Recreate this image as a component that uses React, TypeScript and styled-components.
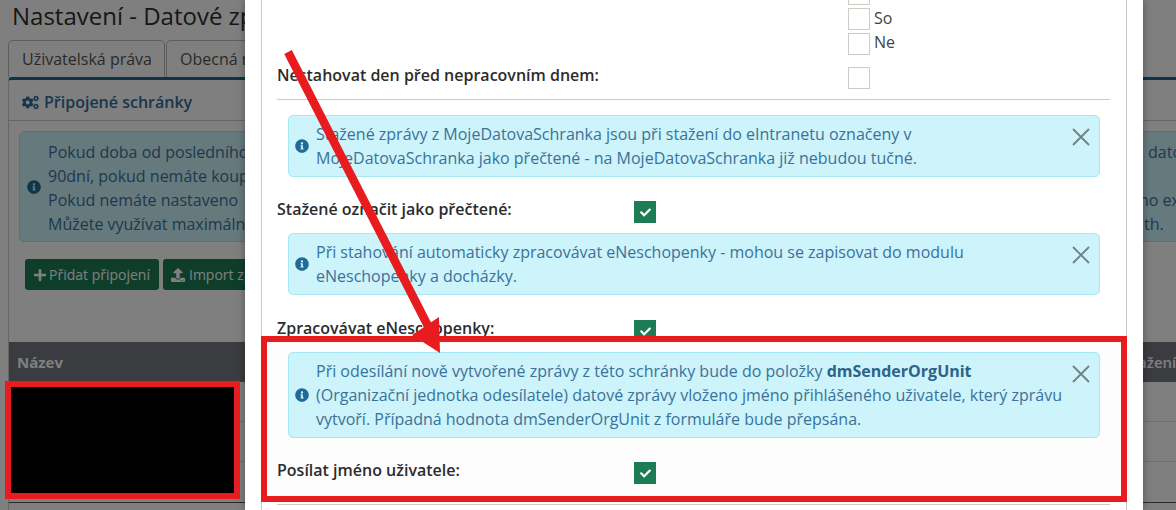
import React from "react";
import styled, { createGlobalStyle } from "styled-components";
import { FaInfoCircle, FaCogs, FaPlus, FaUpload, FaCheck } from "react-icons/fa";

const Global = createGlobalStyle`
  html, body { margin: 0; padding: 0; height: 510px; overflow: hidden; background: #fff; }
  body { font-family: "Open Sans", "Noto Sans", sans-serif; font-size: 16px; line-height: 24px; color: #333; }
  #root { height: 510px; }
`;

const Stage = styled.div`
  position: relative; width: 1176px; height: 510px; overflow: hidden;
`;
const Page = styled.div`
  width: 1260px; padding: 0 0 0 8px; box-sizing: border-box;
`;
const Title = styled.h1`
  margin: 0; padding: 0 0 0 4px; height: 40px; font-size: 24px; line-height: 32px; font-weight: 400; color: #2f2f2f;
`;
const Tabs = styled.div`display: flex; gap: 1px; height: 37px;`;
const Tab = styled.div`
  box-sizing: border-box; height: 37px; padding: 6px 13px 0; border: 1px solid #bbb; border-bottom: 0;
  border-radius: 5px 5px 0 0; color: #555; background: #fff; white-space: nowrap; width: ${p => p.$w}px;
`;
const Panel = styled.section`
  border: 1px solid #ccc; border-top: 3px solid #25648f; border-radius: 4px 0 0 0; height: 600px;
`;
const PanelHead = styled.header`
  height: 41px; box-sizing: border-box; padding: 12px 13px 8px; border-bottom: 1px solid #ccc;
  display: flex; align-items: center; gap: 5px; color: #2f6f9c; font-weight: 600;
`;
const PanelBody = styled.div`padding: 10px 0 0 10px;`;
const BgInfo = styled(FaInfoCircle)`flex: none; width: 14px; height: 14px; color: #1f6b96;`;
const BgAlert = styled.div`
  box-sizing: border-box; height: 111px; padding: 0 0 0 7px; display: flex; align-items: center; gap: 7px;
  background: #cdf3fb; border: 1px solid #a3e8f3; border-radius: 5px; color: #3a7299;
`;
const BgLines = styled.div`margin-top: 2px;`;
const BgLine = styled.div`display: flex; white-space: nowrap;`;
const BgLeft = styled.span`flex: none; width: ${p => p.$w}px; overflow: hidden;`;
const Buttons = styled.div`display: flex; gap: 4px; margin: 17px 0 0 6px;`;
const GreenBtn = styled.button`
  display: flex; align-items: center; gap: ${p => p.$gap}px; height: 31px; padding: 0 9px 0 8px; border: 0; border-radius: 3px;
  background: #1c7c54; color: #fff; font: 14px/20px "Open Sans", sans-serif; white-space: nowrap;
  & > svg { width: 14px; height: 14px; }
`;
const Table = styled.div`margin: 52px 0 0 -10px;`;
const TableHead = styled.div`
  height: 40px; display: flex; justify-content: space-between; align-items: center; padding: 0 8px;
  background: #74787e; color: #fff; font-weight: 700; font-size: 15px;
`;
const TableHeadEnd = styled.span`width: 113px; font-weight: 600;`;
const TableRow = styled.div`height: 39px; border-bottom: 1px solid #ddd;`;
const TableRowLast = styled(TableRow)`height: 40px; border-bottom: 1px solid #555;`;

const Backdrop = styled.div`
  position: absolute; inset: 0; background: rgba(0,0,0,.5);
`;
const Modal = styled.div`
  position: absolute; left: 245px; top: 0; width: 898px; height: 510px; box-sizing: border-box;
  background: #fff; padding: 0 16px; box-shadow: 0 0 8px rgba(0,0,0,.35); overflow: hidden;
`;
const ModalContent = styled.div`
  box-sizing: border-box; height: 510px; border: 1px solid #c8c8c8; border-width: 0 1px; padding: 0 16px 0 15px; overflow: hidden;
`;
const DayList = styled.div`
  display: flex; flex-direction: column; gap: 3px; margin: -17px 0 0 571px;
`;
const Day = styled.div`display: flex; align-items: center; gap: 4px; height: 22px; color: #444; line-height: 20px;`;
const DayName = styled.span`margin-top: -${p => p.$up}px;`;
const Box = styled.span`
  flex: none; box-sizing: border-box; width: 22px; height: 22px; border: 1px solid #cfccc8; background: #fff;
  display: flex; align-items: center; justify-content: center;
`;
const Checked = styled(Box)`
  border: 0; background: #1c7c54; color: #fff; & > svg { width: 11px; height: 11px; }
`;
const FormRow = styled.div`
  display: flex; align-items: center; height: 22px; font-weight: 600; color: #2c2c2c; margin-top: ${p => p.$mt}px;
`;
const Label = styled.span`flex: none; width: ${p => p.$w}px; white-space: nowrap; margin-top: -6px;`;
const Rule = styled.hr`margin: ${p => p.$mt}px 0 0; border: 0; border-top: 1px solid #ccc;`;
const Highlight = styled.div`
  margin: 0 -11px 0 -10px; padding: 10px 11px 12px 10px; background: #fdfdfd;
`;
const InfoIcon = styled(FaInfoCircle)`flex: none; width: 14px; height: 14px; color: #1f6b96;`;
const Alert = styled.div`
  position: relative; box-sizing: border-box; display: flex; align-items: center; gap: 7px; margin: ${p => p.$mt}px 10px 0 11px;
  padding: 6px 30px 6px 6px; background: #cdf3fb; border: 1px solid #a3e8f3; border-radius: 5px; color: #3a7299;
  white-space: nowrap;
  strong { font-weight: 700; color: #2c6488; }
`;
const Close = styled.svg`
  position: absolute; right: 9px; top: 12px; width: 18px; height: 18px; stroke: #6f8184; stroke-width: 1.8; fill: none;
`;
const AlertX = () => <Close viewBox="0 0 18 18"><path d="M1 1 17 17M17 1 1 17" /></Close>;

const RedFrame = styled.div`
  position: absolute; box-sizing: border-box; left: ${p => p.$x}px; top: ${p => p.$y}px; width: ${p => p.$w}px; height: ${p => p.$h}px;
  border: 6px solid #e81c1f; background: ${p => p.$fill};
`;
const Arrow = styled.svg`position: absolute; inset: 0; width: 1176px; height: 510px; pointer-events: none;`;

export default function App() {
  return (
    <Stage>
      <Global />
      <Page>
        <Title>Nastavení - Datové zprávy</Title>
        <Tabs>
          <Tab $w={157}>Uživatelská práva</Tab>
          <Tab $w={160}>Obecná nastavení</Tab>
        </Tabs>
        <Panel>
          <PanelHead><FaCogs size={17} /> Připojené schránky</PanelHead>
          <PanelBody>
            <BgAlert>
              <BgInfo />
              <BgLines>
                <BgLine><BgLeft $w={1100}>Pokud doba od posledního stažení přesáhne</BgLeft><span>dato</span></BgLine>
                <BgLine>90dní, pokud nemáte koupenou</BgLine>
                <BgLine><BgLeft $w={1091}>Pokud nemáte nastaveno</BgLeft><span>no ex</span></BgLine>
                <BgLine><BgLeft $w={1096}>Můžete využívat maximálně</BgLeft><span>th.</span></BgLine>
              </BgLines>
            </BgAlert>
            <Buttons>
              <GreenBtn $gap={2}><FaPlus />Přidat připojení</GreenBtn>
              <GreenBtn $gap={4}><FaUpload />Import zpráv</GreenBtn>
            </Buttons>
            <Table>
              <TableHead><span>Název</span><TableHeadEnd>ažení</TableHeadEnd></TableHead>
              <TableRow />
              <TableRow />
              <TableRowLast />
            </Table>
          </PanelBody>
        </Panel>
      </Page>
      <Backdrop />
      <Modal>
        <ModalContent>
          <DayList>
            <Day><Box /></Day>
            <Day><Box /><DayName $up={3}>So</DayName></Day>
            <Day><Box /><DayName $up={4}>Ne</DayName></Day>
          </DayList>
          <FormRow $mt={12}><Label $w={571}>Nestahovat den před nepracovním dnem:</Label><Box /></FormRow>
          <Rule $mt={10} />
          <Alert $mt={15}>
            <InfoIcon />
            <div>Stažené zprávy z MojeDatovaSchranka jsou při stažení do eIntranetu označeny v<br />MojeDatovaSchranka jako přečtené - na MojeDatovaSchranka již nebudou tučné.</div>
            <AlertX />
          </Alert>
          <FormRow $mt={24}><Label $w={357}>Stažené označit jako přečtené:</Label><Checked><FaCheck /></Checked></FormRow>
          <Alert $mt={10}>
            <InfoIcon />
            <div>Při stahování automaticky zpracovávat eNeschopenky - mohou se zapisovat do modulu<br />eNeschopenky a docházky.</div>
            <AlertX />
          </Alert>
          <FormRow $mt={25}><Label $w={357}>Zpracovávat eNeschopenky:</Label><Checked><FaCheck /></Checked></FormRow>
          <Highlight>
            <Alert $mt={0}>
              <InfoIcon />
              <div>Při odesílání nově vytvořené zprávy z této schránky bude do položky <strong>dmSenderOrgUnit</strong><br />(Organizační jednotka odesílatele) datové zprávy vloženo jméno přihlášeného uživatele, který zprávu<br />vytvoří. Případná hodnota dmSenderOrgUnit z formuláře bude přepsána.</div>
              <AlertX />
            </Alert>
            <FormRow $mt={24}><Label $w={357}>Posílat jméno uživatele:</Label><Checked><FaCheck /></Checked></FormRow>
          </Highlight>
          <Rule $mt={8} />
        </ModalContent>
      </Modal>
      <RedFrame $x={261} $y={336} $w={866} $h={166} $fill="transparent" />
      <RedFrame $x={5} $y={381} $w={235} $h={118} $fill="#000" />
      <Arrow viewBox="0 0 1176 510">
        <path d="M288 52 L428 326" stroke="#e81c1f" strokeWidth="8.5" fill="none" />
        <path d="M440 353 L412 335 L439 317 Z" fill="#e81c1f" />
      </Arrow>
    </Stage>
  );
}
